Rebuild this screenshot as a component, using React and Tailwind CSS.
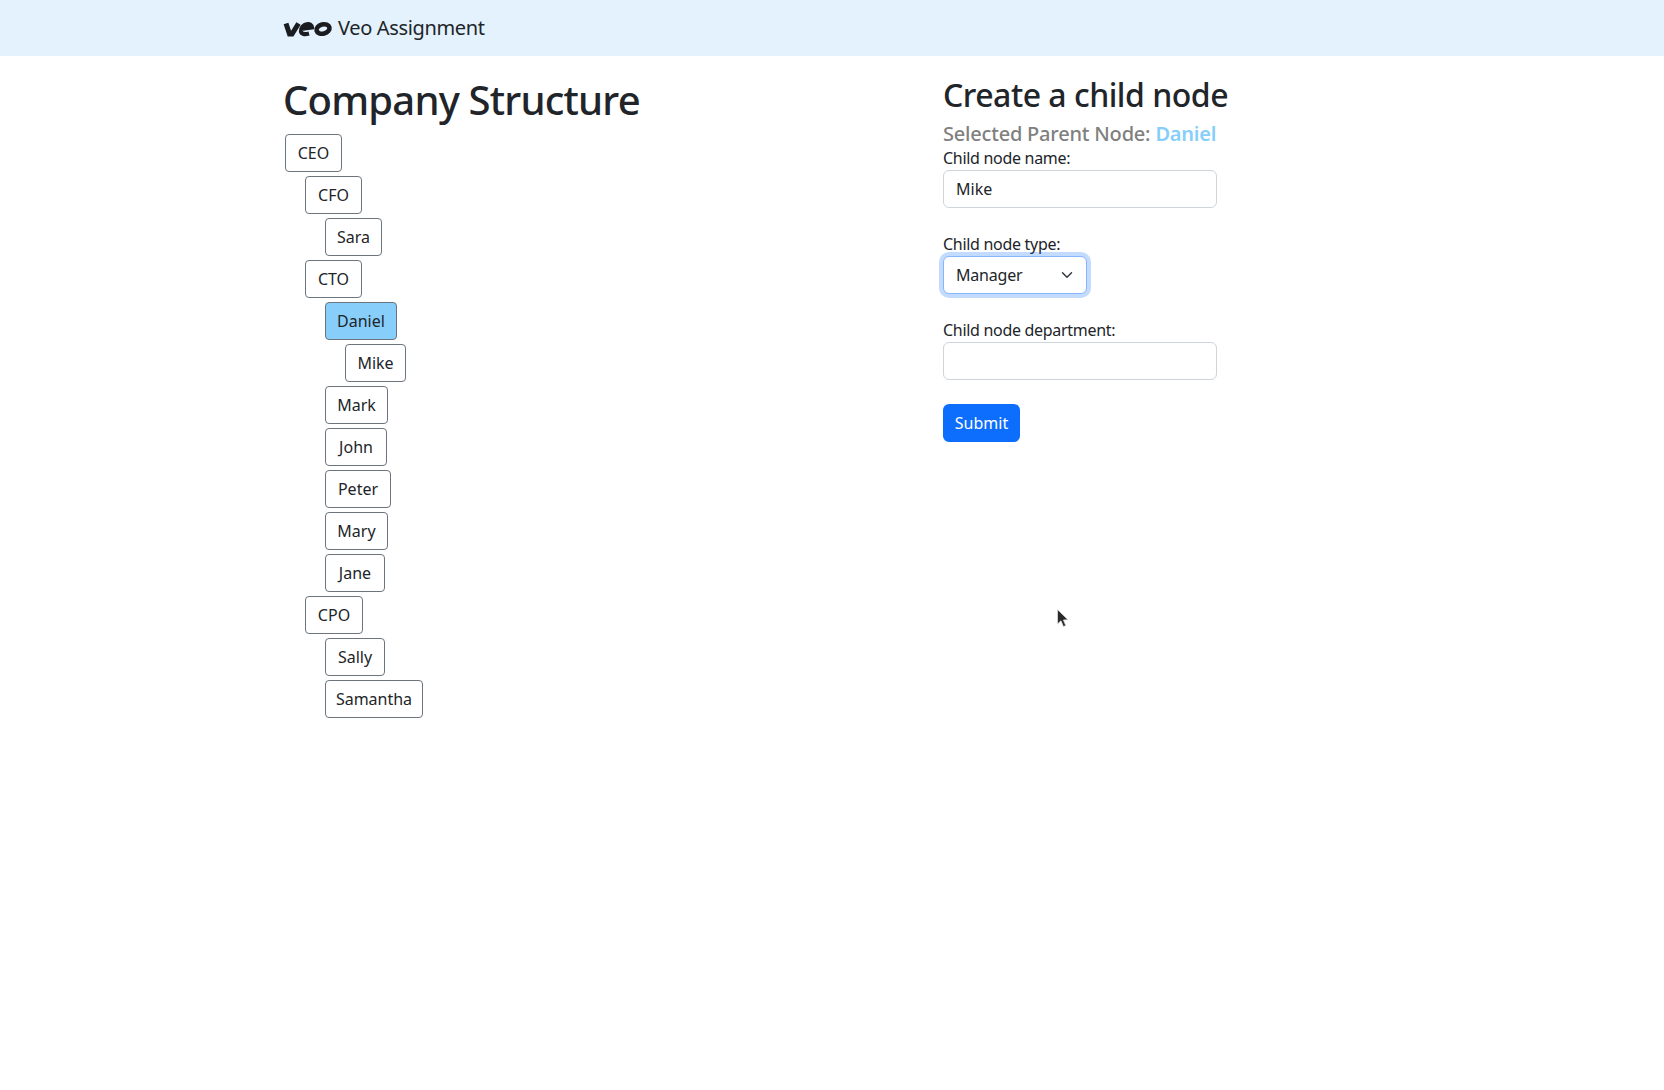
const font = "font-['Noto_Sans',sans-serif]";

const tree = [
  { name: "CEO", cls: "ml-0.5 w-[57px]" },
  { name: "CFO", cls: "ml-[22px] w-[57px]" },
  { name: "Sara", cls: "ml-[42px] w-[57px]" },
  { name: "CTO", cls: "ml-[22px] w-[57px]" },
  { name: "Daniel", cls: "ml-[42px] w-[72px]", selected: true },
  { name: "Mike", cls: "ml-[62px] w-[61px]" },
  { name: "Mark", cls: "ml-[42px] w-[63px]" },
  { name: "John", cls: "ml-[42px] w-[62px]" },
  { name: "Peter", cls: "ml-[42px] w-[66px]" },
  { name: "Mary", cls: "ml-[42px] w-[63px]" },
  { name: "Jane", cls: "ml-[42px] w-[60px]" },
  { name: "CPO", cls: "ml-[22px] w-[58px]" },
  { name: "Sally", cls: "ml-[42px] w-[60px]" },
  { name: "Samantha", cls: "ml-[42px] w-[98px]" },
];

function VeoLogo() {
  return (
    <svg width="50" height="18" viewBox="0 0 50 18" className="shrink-0 text-[#1b1c20]" fill="none" stroke="currentColor">
      <path d="M3 4.5 L6.5 15 L9 15 L15.5 4.5" strokeWidth="5" />
      <path d="M18 10 L29 8.5 C29 6 26.5 5 24.5 5.2 C20.5 5.5 17.5 9 18 12.5 C18.4 15 21.5 15.7 26 14.5" strokeWidth="4.2" />
      <ellipse cx="40" cy="10" rx="6.6" ry="4.6" strokeWidth="4.6" transform="rotate(-14 40 10)" />
    </svg>
  );
}

function Cursor() {
  return (
    <svg width="13" height="21" viewBox="0 0 13 21" className="absolute left-[1056px] top-[608px]">
      <path d="M1.5 1.5 L1.5 16 L5 12.8 L7.4 18.6 L9.8 17.6 L7.4 12 L12 11.8 Z" fill="#2a2a2a" stroke="#ddd" strokeWidth="0.8" />
    </svg>
  );
}

export default function App() {
  return (
    <div className={`relative min-h-[1090px] bg-white text-[#212529] text-base ${font}`}>
      {/* Navbar */}
      <nav className="flex h-14 items-center bg-[#e3f2fd] pl-[283px]">
        <VeoLogo />
        <span className="ml-[5px] text-xl tracking-[-0.35px]">Veo Assignment</span>
      </nav>

      <div className="flex pl-[283px]">
        {/* Company tree */}
        <div className="w-[660px]">
          <h1 className="mt-5 text-[40px] font-medium leading-[48px] tracking-[-0.8px]">Company Structure</h1>
          <div className="mt-2 flex flex-col items-start">
            {tree.map((node) => (
              <button
                key={node.name}
                className={`my-0.5 h-[38px] rounded border border-[#6c757d] ${node.cls} ${
                  node.selected ? "bg-[#87cefa]" : "bg-white"
                }`}
              >
                {node.name}
              </button>
            ))}
          </div>
        </div>

        {/* Form */}
        <div>
          <h2 className="mt-5 text-[32px] font-medium leading-[38px] tracking-[-0.5px]">Create a child node</h2>
          <h5 className="mt-2 text-xl font-medium leading-6 tracking-[-0.2px] text-[#808080]">
            Selected Parent Node: <span className="font-semibold text-[#87cefa]">Daniel</span>
          </h5>
          <form className="flex flex-col items-start">
            <label className="leading-6 tracking-[-0.3px]">Child node name:</label>
            <input
              defaultValue="Mike"
              className="h-[38px] w-[274px] rounded-md border border-[#ced4da] px-3 outline-none"
            />
            <label className="mt-6 leading-6 tracking-[-0.3px]">Child node type:</label>
            <div className="relative">
              <select className="h-[38px] w-[144px] appearance-none rounded-md border border-[#86b7fe] bg-white px-3 tracking-[-0.2px] shadow-[0_0_0_4px_rgba(13,110,253,0.25)] outline-none">
                <option>Manager</option>
              </select>
              <svg width="16" height="12" viewBox="0 0 16 16" className="pointer-events-none absolute right-3 top-[13px]" fill="none" stroke="#343a40" strokeWidth="2" strokeLinecap="round" strokeLinejoin="round">
                <path d="M2 5l6 6 6-6" />
              </svg>
            </div>
            <label className="mt-6 leading-6 tracking-[-0.3px]">Child node department:</label>
            <input className="h-[38px] w-[274px] rounded-md border border-[#ced4da] px-3 outline-none" />
            <button type="button" className="mt-6 h-[38px] w-[77px] rounded-md bg-[#0d6efd] text-white">
              Submit
            </button>
          </form>
        </div>
      </div>

      <Cursor />
    </div>
  );
}
